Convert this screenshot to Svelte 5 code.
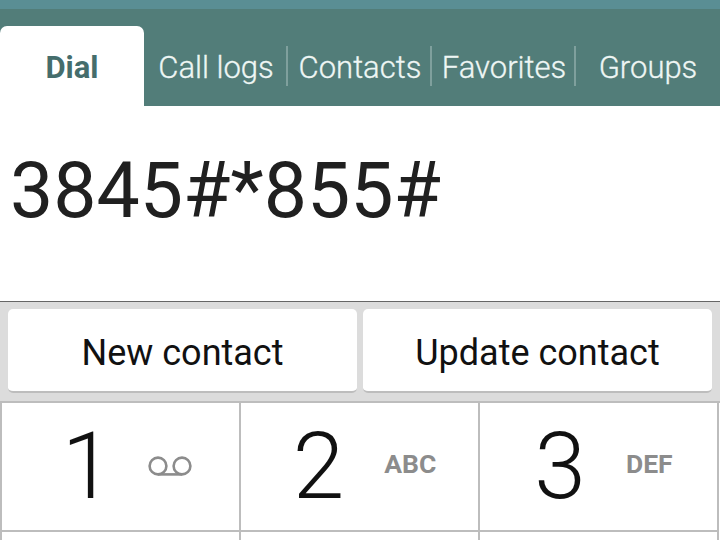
<script>
  const tabs = ["Call logs", "Contacts", "Favorites", "Groups"];
  const keys = [
    { digit: "1", voicemail: true },
    { digit: "2", letters: "ABC" },
    { digit: "3", letters: "DEF" }
  ];
</script>

<main class="dialer">
  <div class="status"></div>
  <nav class="tabs">
    <div class="tab active">Dial</div>
    {#each tabs as tab}
      <div class="tab">{tab}</div>
    {/each}
  </nav>

  <div class="number">3845#*855#</div>

  <div class="actions">
    <button class="action">New contact</button>
    <button class="action">Update contact</button>
  </div>

  <div class="keypad">
    {#each keys as key}
      <div class="key">
        <span class="digit">{key.digit}</span>
        {#if key.voicemail}
          <svg class="voicemail" width="44" height="20" viewBox="0 0 44 20" fill="none" stroke="#8c8c8c" stroke-width="2.6">
            <circle cx="10" cy="10" r="8.4" />
            <circle cx="34" cy="10" r="8.4" />
            <path d="M10 18.4H34" />
          </svg>
        {:else}
          <span class="letters">{key.letters}</span>
        {/if}
      </div>
    {/each}
    <!-- next row starts right at the bottom edge, only its top line shows -->
    <div class="key"></div>
    <div class="key"></div>
    <div class="key"></div>
  </div>
</main>

<style>
  :global(body) {
    margin: 0;
    background: #fff;
    overflow: hidden;
  }
  .dialer {
    width: 720px;
    height: 540px;
    overflow: hidden;
    font-family: Roboto, "Liberation Sans", sans-serif;
  }
  .status {
    height: 9px;
    background: #5a8e94;
  }
  .tabs {
    display: flex;
    align-items: flex-end;
    height: 97px;
    background: #527d79;
  }
  .tab {
    position: relative;
    width: 144px;
    height: 80px;
    padding-top: 2px;
    box-sizing: border-box;
    display: flex;
    align-items: center;
    justify-content: center;
    color: #eef6f4;
    font-size: 31px;
    font-weight: 300;
    -webkit-text-stroke: 0.3px #eef6f4;
    white-space: nowrap;
  }
  .tab:not(.active):not(:last-child)::after {
    content: "";
    position: absolute;
    right: 0;
    top: 20px;
    height: 40px;
    width: 2px;
    background: #7fa09d;
  }
  .tab.active {
    background: #fff;
    color: #456d6c;
    font-weight: 700;
    -webkit-text-stroke: 0;
    border-radius: 7px 7px 0 0;
  }
  .number {
    height: 195px;
    box-sizing: border-box;
    padding: 29px 0 0 10px;
    font-size: 77px;
    line-height: 112px;
    color: #202020;
    white-space: nowrap;
  }
  .actions {
    height: 100px;
    box-sizing: border-box;
    display: flex;
    gap: 6px;
    padding: 7px 8px 8px;
    border-top: 1px solid #666;
    background: #dcdcdc;
  }
  .action {
    flex: 1;
    border: 0;
    border-bottom: 2px solid #bdbdbd;
    border-radius: 5px;
    background: #fff;
    padding: 5px 0 0;
    font-family: inherit;
    font-size: 36px;
    color: #111;
  }
  .keypad {
    display: grid;
    grid-template-columns: repeat(3, 239px);
    grid-auto-rows: 129px;
    border-top: 2px solid #bdbdbd;
    border-left: 2px solid #bdbdbd;
  }
  .key {
    box-sizing: border-box;
    border-right: 2px solid #bdbdbd;
    border-bottom: 2px solid #bdbdbd;
    display: flex;
    align-items: center;
    justify-content: center;
    gap: 40px;
    padding-left: 10px;
    background: #fff;
  }
  .digit {
    font-size: 93px;
    font-weight: 300;
    line-height: 1;
    color: #111;
  }
  .voicemail {
    margin: 0 -3px 1px -5px;
  }
  .letters {
    margin-bottom: 6px;
    font-size: 26.5px;
    font-weight: 700;
    color: #8c8c8c;
  }
</style>
